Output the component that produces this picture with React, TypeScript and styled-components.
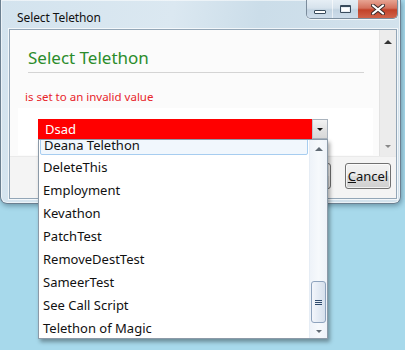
import { createGlobalStyle } from 'styled-components'
import styled from 'styled-components'

const GlobalStyle = createGlobalStyle`
  html, body {
    margin: 0;
    padding: 0;
    background: #a7d9eb;
  }
  body {
    font-family: 'Noto Sans', 'Open Sans', sans-serif;
    font-size: 12px;
  }
  #root {
    width: 405px;
    height: 350px;
    overflow: hidden;
    position: relative;
  }
`

const telethons = [
  'Deana Telethon',
  'DeleteThis',
  'Employment',
  'Kevathon',
  'PatchTest',
  'RemoveDestTest',
  'SameerTest',
  'See Call Script',
  'Telethon of Magic'
]

const Window = styled.div`
  width: 399px;
  height: 203px;
  display: flex;
  flex-direction: column;
  border: 1px solid #6b7f90;
  border-top: none;
  border-radius: 0 0 7px 7px;
  background: linear-gradient(100deg, #d3e3ee 0%, #dbe8f1 40%, #cbdde9 60%, #d4e3ed 100%);
  box-shadow: 1px 2px 5px rgba(40, 70, 90, 0.45), inset 0 0 0 1px rgba(255, 255, 255, 0.55);
`

const TitleBar = styled.div`
  height: 29px;
  flex: none;
  display: flex;
  align-items: flex-start;
  justify-content: space-between;
`

const Title = styled.div`
  padding: 9px 0 0 16px;
  font-size: 12px;
  color: #111;
  letter-spacing: -0.1px;
`

const CaptionGroup = styled.div`
  display: flex;
  margin-right: 2px;
  height: 18px;
  border: 1px solid #7b8c9c;
  border-top: none;
  border-radius: 0 0 5px 5px;
  overflow: hidden;
  box-shadow: 0 1px 0 rgba(255, 255, 255, 0.7);
`

const CaptionButton = styled.div<{ $close?: boolean }>`
  width: ${(p) => (p.$close ? 39 : 25)}px;
  display: flex;
  align-items: center;
  justify-content: center;
  border-left: ${(p) => (p.$close ? 'none' : '1px solid rgba(255,255,255,0.6)')};
  background: ${(p) =>
    p.$close
      ? 'linear-gradient(180deg, #e7a493 0%, #d4715d 45%, #c24229 55%, #d0634a 100%)'
      : 'linear-gradient(180deg, #e6eef5 0%, #d6e2ec 45%, #c2d3e1 55%, #cddcea 100%)'};
  &:first-child {
    border-left: none;
  }
`

const MinIcon = styled.div`
  width: 10px;
  height: 2px;
  margin-top: 6px;
  border: 1px solid #394b5c;
  background: #fff;
  border-radius: 1px;
`

const MaxIcon = styled.div`
  width: 9px;
  height: 5px;
  border: 1px solid #394b5c;
  border-top-width: 2px;
  background: #fff;
  box-shadow: inset 0 0 0 1px #e8eef4;
  border-radius: 1px;
`

const Client = styled.div`
  margin: 0 3px 0 8px;
  height: 168px;
  display: flex;
  flex-direction: column;
  border: 1px solid #93a6b7;
  background: #fafafa;
  box-shadow: 0 0 0 1px rgba(255, 255, 255, 0.7);
`

const ScrollRegion = styled.div`
  height: 126px;
  flex: none;
  display: flex;
`

const Content = styled.div`
  flex: 1;
  padding: 0 6px 0 8px;
  background: #fbfbfb;
`

const Heading = styled.div`
  margin: 16px 9px 0 10px;
  padding-bottom: 3px;
  border-bottom: 1px solid #d4d4d4;
  font-size: 17px;
  color: #2b8c2b;
  line-height: 23px;
`

const ErrorText = styled.div`
  margin: 16px 0 0 7px;
  font-size: 11.5px;
  color: #e8242a;
  line-height: 16px;
`

const FieldPanel = styled.div`
  box-sizing: border-box;
  margin-top: 3px;
  height: 47px;
  background: #fff;
  padding: 11px 0 0 20px;
`

const Combo = styled.div`
  position: relative;
  width: 290px;
  height: 20px;
  display: flex;
`

const ComboValue = styled.div`
  flex: 1;
  background: #ff0000;
  color: #fff;
  font-size: 13px;
  line-height: 20px;
  padding-left: 7px;
`

const ComboArrow = styled.div`
  width: 14px;
  display: flex;
  align-items: center;
  justify-content: center;
  background: linear-gradient(180deg, #f3f3f3 0%, #e3e3e3 50%, #d8d8d8 100%);
  border: 1px solid #aab3bd;
  border-left: 1px solid #bcc4cc;
`

const TriDown = styled.div<{ $color?: string }>`
  width: 0;
  height: 0;
  border-left: 3px solid transparent;
  border-right: 3px solid transparent;
  border-top: 3px solid ${(p) => p.$color || '#111'};
`

const TriUp = styled.div<{ $color?: string }>`
  width: 0;
  height: 0;
  border-left: 4px solid transparent;
  border-right: 4px solid transparent;
  border-bottom: 4px solid ${(p) => p.$color || '#444'};
`

const VScroll = styled.div`
  width: 16px;
  flex: none;
  display: flex;
  flex-direction: column;
  justify-content: space-between;
  align-items: center;
  padding: 10px 0 8px;
  background: #ececec;
  border-left: 1px solid #e2e2e2;
`

const Footer = styled.div`
  flex: 1;
  display: flex;
  justify-content: flex-end;
  align-items: flex-start;
  gap: 14px;
  padding: 6px 5px 0 0;
  background: #f4f4f4;
  border-top: 1px solid #eaeaea;
`

const Button = styled.div<{ $width: number }>`
  width: ${(p) => p.$width}px;
  height: 24px;
  display: flex;
  align-items: center;
  justify-content: center;
  border: 1px solid #707070;
  border-radius: 3px;
  background: linear-gradient(180deg, #f2f2f2 0%, #ebebeb 50%, #dddddd 51%, #cfcfcf 100%);
  box-shadow: inset 0 0 0 1px rgba(255, 255, 255, 0.7);
  font-size: 13px;
  color: #111;
`

const Popup = styled.div`
  position: absolute;
  left: 0;
  top: 20px;
  width: 288px;
  height: 198px;
  display: flex;
  background: #fff;
  border: 1px solid #8c9aa8;
  box-shadow: 2px 3px 4px rgba(0, 0, 0, 0.35);
  z-index: 2;
`

const Viewport = styled.div`
  flex: 1;
  overflow: hidden;
`

const ItemList = styled.div`
  margin-top: -8px;
`

const Item = styled.div<{ $active?: boolean }>`
  height: 23px;
  line-height: 22px;
  padding-top: 1px;
  padding-left: ${(p) => (p.$active ? 3 : 4)}px;
  margin: 0 ${(p) => (p.$active ? 1 : 0)}px;
  font-size: 13px;
  color: #111;
  background: ${(p) => (p.$active ? '#f1f7fd' : 'transparent')};
  border: ${(p) => (p.$active ? '1px solid #a7cdf0' : 'none')};
  border-radius: 2px;
  box-sizing: border-box;
`

const ListScroll = styled.div`
  width: 17px;
  flex: none;
  display: flex;
  flex-direction: column;
  align-items: center;
  padding: 7px 0 5px;
  background: linear-gradient(90deg, #eef3f9 0%, #f6f9fc 50%, #eef3f9 100%);
  border-left: 1px solid #e6edf5;
`

const Thumb = styled.div`
  margin-top: auto;
  margin-bottom: 7px;
  width: 13px;
  height: 40px;
  display: flex;
  align-items: center;
  justify-content: center;
  border: 1px solid #8ea3bd;
  border-radius: 3px;
  background: linear-gradient(90deg, #f3f6fb 0%, #e4ebf4 50%, #d6e0ec 100%);
`

const Grip = styled.div`
  width: 7px;
  display: flex;
  flex-direction: column;
  gap: 1px;
  & > span {
    height: 1px;
    background: #2f4a6c;
  }
`

const CloseGlyph = () => (
  <svg width="14" height="11" viewBox="0 0 14 11">
    <path d="M2 1.5 L12 9.5 M12 1.5 L2 9.5" stroke="#3a2a2a" strokeWidth="4" strokeLinecap="round" />
    <path d="M2 1.5 L12 9.5 M12 1.5 L2 9.5" stroke="#fff" strokeWidth="2.2" strokeLinecap="round" />
  </svg>
)

export default function App() {
  return (
    <>
      <GlobalStyle />
      <Window>
        <TitleBar>
          <Title>Select Telethon</Title>
          <CaptionGroup>
            <CaptionButton>
              <MinIcon />
            </CaptionButton>
            <CaptionButton>
              <MaxIcon />
            </CaptionButton>
            <CaptionButton $close>
              <CloseGlyph />
            </CaptionButton>
          </CaptionGroup>
        </TitleBar>
        <Client>
          <ScrollRegion>
            <Content>
              <Heading>Select Telethon</Heading>
              <ErrorText>is set to an invalid value</ErrorText>
              <FieldPanel>
                <Combo>
                  <ComboValue>Dsad</ComboValue>
                  <ComboArrow>
                    <TriDown />
                  </ComboArrow>
                  <Popup>
                    <Viewport>
                      <ItemList>
                        {telethons.map((name, i) => (
                          <Item key={name} $active={i === 0}>
                            {name}
                          </Item>
                        ))}
                      </ItemList>
                    </Viewport>
                    <ListScroll>
                      <TriUp $color="#606a74" />
                      <Thumb>
                        <Grip>
                          <span />
                          <span />
                          <span />
                        </Grip>
                      </Thumb>
                      <TriDown $color="#606a74" />
                    </ListScroll>
                  </Popup>
                </Combo>
              </FieldPanel>
            </Content>
            <VScroll>
              <TriUp $color="#333" />
              <TriDown $color="#888" />
            </VScroll>
          </ScrollRegion>
          <Footer>
            <Button $width={75}>OK</Button>
            <Button $width={44}>
              <span>
                <u>C</u>ancel
              </span>
            </Button>
          </Footer>
        </Client>
      </Window>
    </>
  )
}
